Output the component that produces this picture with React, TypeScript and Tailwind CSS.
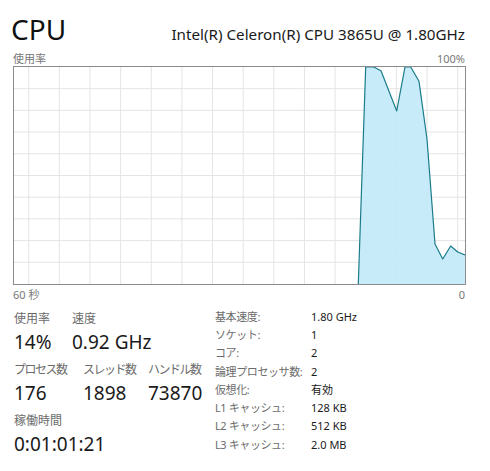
import React from "react";

const FONT = `"Noto Sans", "Noto Sans CJK JP", sans-serif`;

const W = 451;
const H = 217;

const points: [number, number][] = [
  [344.3, 217],
  [351.7, 0],
  [359.7, 0],
  [367, 3.7],
  [382.7, 44],
  [391, 0],
  [396.7, 0],
  [405, 14.3],
  [413, 72],
  [421, 177],
  [428.7, 192],
  [436.7, 179],
  [443.7, 185],
  [451, 188],
];

const UsageChart = () => {
  const vLines = Array.from({ length: 15 }, (_, i) => 14.7 + i * 30.64);
  const hLines = Array.from({ length: 9 }, (_, i) => 21.7 * (i + 1));
  const line = points.map(([x, y]) => `${x},${y}`).join(" ");
  const area = `${line} ${W},${H}`;

  return (
    <div className="ml-[13px] w-[453px] h-[219px] border border-[#8b8b8b] bg-white">
      <svg width={W} height={H} viewBox={`0 0 ${W} ${H}`} className="block">
        {vLines.map((x) => (
          <line key={`v${x}`} x1={x} y1={0} x2={x} y2={H} stroke="#e4e4e4" strokeWidth={1} />
        ))}
        {hLines.map((y) => (
          <line key={`h${y}`} x1={0} y1={y} x2={W} y2={y} stroke="#e4e4e4" strokeWidth={1} />
        ))}
        <polygon points={area} fill="#c3e9f8" fillOpacity={0.92} />
        <polyline points={line} fill="none" stroke="#1a7c8a" strokeWidth={1.2} strokeLinejoin="round" />
      </svg>
    </div>
  );
};

const Stat = ({
  label,
  value,
  className,
  kana,
}: {
  label: string;
  value: string;
  className?: string;
  kana?: boolean;
}) => {
  return (
    <div className={`flex flex-col ${className ?? ""}`}>
      <span
        className={`text-[12px] leading-[16px] text-[#6b6b6b] whitespace-nowrap ${kana ? "tracking-[-1.5px]" : ""}`}
      >
        {label}
      </span>
      <span className="text-[19px] leading-[30px] text-[#1a1a1a]">{value}</span>
    </div>
  );
};

const specs: [string, string][] = [
  ["基本速度:", "1.80 GHz"],
  ["ソケット:", "1"],
  ["コア:", "2"],
  ["論理プロセッサ数:", "2"],
  ["仮想化:", "有効"],
  ["L1 キャッシュ:", "128 KB"],
  ["L2 キャッシュ:", "512 KB"],
  ["L3 キャッシュ:", "2.0 MB"],
];

export default function App() {
  return (
    <main className="w-[490px] h-[471px] bg-white overflow-hidden" style={{ fontFamily: FONT }}>
      <header className="flex items-baseline justify-between pl-[11px] pr-[25px] pt-[14px]">
        <h1 className="text-[28px] leading-[30px] text-[#111]">CPU</h1>
        <p className="text-[15.2px] text-[#1a1a1a]">Intel(R) Celeron(R) CPU 3865U @ 1.80GHz</p>
      </header>

      <section className="mt-[6px]">
        <div className="flex justify-between pl-[13px] pr-[25px] text-[11px] leading-[14px] text-[#777]">
          <span>使用率</span>
          <span>100%</span>
        </div>
        <UsageChart />
        <div className="flex justify-between pl-[13px] pr-[25px] pt-[3px] text-[11px] leading-[14px] text-[#777]">
          <span>60 秒</span>
          <span>0</span>
        </div>
      </section>

      <section className="flex pl-[14px] pt-[6px]">
        <div className="w-[201px] flex flex-col gap-[5px] pt-[3px]">
          <div className="flex">
            <Stat label="使用率" value="14%" className="w-[58px]" />
            <Stat label="速度" value="0.92 GHz" />
          </div>
          <div className="flex">
            <Stat label="プロセス数" value="176" className="w-[69px]" kana />
            <Stat label="スレッド数" value="1898" className="w-[65px]" kana />
            <Stat label="ハンドル数" value="73870" kana />
          </div>
          <Stat label="稼働時間" value="0:01:01:21" />
        </div>

        <div className="grid grid-cols-[96px_auto] auto-rows-[18.3px] text-[11px] tracking-[-0.4px] items-center">
          {specs.map(([k, v]) => (
            <React.Fragment key={k}>
              <span className="text-[#6b6b6b]">{k}</span>
              <span className="text-[#1a1a1a] tracking-normal">{v}</span>
            </React.Fragment>
          ))}
        </div>
      </section>
    </main>
  );
}
